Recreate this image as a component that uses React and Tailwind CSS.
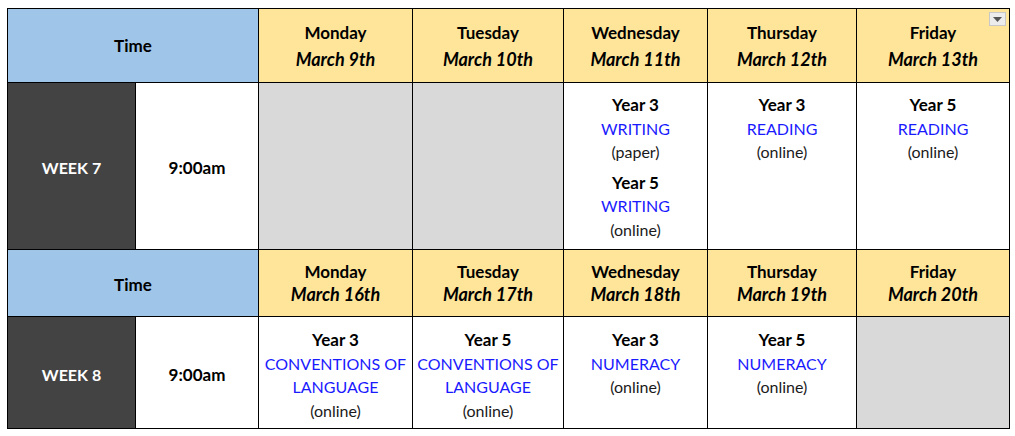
import React from "react";

const font = { fontFamily: "Lato, 'Liberation Sans', sans-serif" };

function DayHeader({ day, date, first, dropdown }) {
  const lh = first ? "leading-[26px]" : "leading-[23px]";
  return (
    <div className="relative bg-[#ffe599] flex flex-col items-center justify-center text-black">
      <div className={`font-bold text-[17px] ${lh}`}>{day}</div>
      <div className={`font-bold italic text-[18px] ${lh}`}>{date}</div>
      {dropdown && (
        <div className="absolute top-[3px] right-[3px] w-[17px] h-[14px] bg-[#ececec] border border-[#c8c8c8] flex items-center justify-center">
          <svg width="9" height="5" viewBox="0 0 9 5">
            <path d="M0 0 H9 L4.5 5 Z" fill="#555" />
          </svg>
        </div>
      )}
    </div>
  );
}

function Entry({ year, subject, mode }) {
  return (
    <div className="flex flex-col items-center leading-[23.5px]">
      <div className="font-bold text-black text-[17px]">{year}</div>
      {subject.map((s) => (
        <div key={s} className="text-[#1a1aff]">{s}</div>
      ))}
      <div className="text-[#1a1a1a]">{mode}</div>
    </div>
  );
}

function Body({ children, pt = "pt-[10px]" }) {
  return (
    <div className={`bg-white flex flex-col items-center text-[16px] text-center ${pt} gap-[7px]`}>
      {children}
    </div>
  );
}

const Gray = () => <div className="bg-[#d9d9d9]" />;

export default function App() {
  return (
    <div className="bg-white w-[1015px] h-[436px] pl-[7px] pt-[8px]" style={font}>
      <div className="grid w-fit grid-cols-[127px_122px_153px_150px_143px_148px_152px] grid-rows-[73px_166px_66px_111px] gap-px bg-black border border-black">
        <div className="col-span-2 bg-[#9fc5e8] flex items-center justify-center font-bold text-[17px] text-black">Time</div>
        <DayHeader first day="Monday" date="March 9th" />
        <DayHeader first day="Tuesday" date="March 10th" />
        <DayHeader first day="Wednesday" date="March 11th" />
        <DayHeader first day="Thursday" date="March 12th" />
        <DayHeader first day="Friday" date="March 13th" dropdown />

        <div className="bg-[#434343] flex items-center justify-center font-bold text-white text-[16px] pt-[4px]">WEEK 7</div>
        <div className="bg-white flex items-center justify-center font-bold text-black text-[17px] pt-[4px]">9:00am</div>
        <Gray />
        <Gray />
        <Body>
          <Entry year="Year 3" subject={["WRITING"]} mode="(paper)" />
          <Entry year="Year 5" subject={["WRITING"]} mode="(online)" />
        </Body>
        <Body>
          <Entry year="Year 3" subject={["READING"]} mode="(online)" />
        </Body>
        <Body>
          <Entry year="Year 5" subject={["READING"]} mode="(online)" />
        </Body>

        <div className="col-span-2 bg-[#9fc5e8] flex items-center justify-center font-bold text-[17px] text-black pt-[3px]">Time</div>
        <DayHeader day="Monday" date="March 16th" />
        <DayHeader day="Tuesday" date="March 17th" />
        <DayHeader day="Wednesday" date="March 18th" />
        <DayHeader day="Thursday" date="March 19th" />
        <DayHeader day="Friday" date="March 20th" />

        <div className="bg-[#434343] flex items-center justify-center font-bold text-white text-[16px] pt-[4px]">WEEK 8</div>
        <div className="bg-white flex items-center justify-center font-bold text-black text-[17px] pt-[4px]">9:00am</div>
        <Body pt="pt-[11px]">
          <Entry year="Year 3" subject={["CONVENTIONS OF", "LANGUAGE"]} mode="(online)" />
        </Body>
        <Body pt="pt-[11px]">
          <Entry year="Year 5" subject={["CONVENTIONS OF", "LANGUAGE"]} mode="(online)" />
        </Body>
        <Body pt="pt-[11px]">
          <Entry year="Year 3" subject={["NUMERACY"]} mode="(online)" />
        </Body>
        <Body pt="pt-[11px]">
          <Entry year="Year 5" subject={["NUMERACY"]} mode="(online)" />
        </Body>
        <Gray />
      </div>
    </div>
  );
}
